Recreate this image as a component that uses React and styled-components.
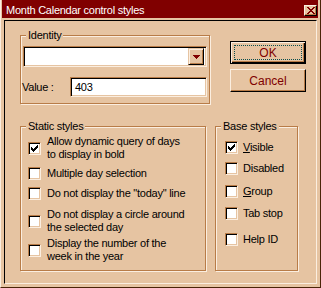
import styled, { createGlobalStyle } from "styled-components";

const face = "#e6c4a2";
const light = "#fbeee0";
const shadow = "#b87c48";
const maroon = "#800000";

const GlobalStyle = createGlobalStyle`
  body {
    margin: 0;
    font-family: "Liberation Sans", Arial, sans-serif;
    font-size: 11px;
    letter-spacing: -0.25px;
    color: #000;
  }
`;

const Frame = styled.div`
  box-sizing: border-box;
  width: 321px;
  height: 288px;
  display: flex;
  flex-direction: column;
  padding: 0 2px 3px 1px;
  background: ${face};
  border-left: 1px solid ${light};
  border-right: 1px solid #4a2408;
  border-bottom: 1px solid #4a2408;
`;

const TitleBar = styled.div`
  box-sizing: border-box;
  height: 18px;
  display: flex;
  align-items: flex-start;
  justify-content: space-between;
  padding: 4px 1px 0 4px;
  background: ${maroon};
  color: #fff;
  line-height: 13px;
`;

const CloseButton = styled.div`
  box-sizing: border-box;
  width: 13px;
  height: 11px;
  margin-top: 1px;
  display: flex;
  align-items: center;
  justify-content: center;
  background: ${face};
  border: 1px solid;
  border-color: ${light} #000 #000 ${light};
  box-shadow: inset -1px -1px 0 ${shadow};
`;

const Client = styled.div`
  flex: 1;
  box-sizing: border-box;
  margin: 2px 1px 0 2px;
  padding: 14px 0 0 15px;
  border: 1px solid;
  border-color: #000 ${light} ${light} #000;
`;

const Row = styled.div`
  display: flex;
  align-items: flex-start;
`;

const Group = styled.div`
  position: relative;
  box-sizing: border-box;
  width: ${(p) => p.$w}px;
  height: ${(p) => p.$h}px;
  padding: ${(p) => p.$pad};
  margin-left: ${(p) => p.$ml || 0}px;
  border: 1px solid ${shadow};
  box-shadow: 1px 1px 0 ${light}, inset 1px 1px 0 ${light};
`;

const Caption = styled.span`
  position: absolute;
  top: -7px;
  left: 5px;
  padding: 0 2px;
  line-height: 13px;
  background: ${face};
`;

const Combo = styled.div`
  box-sizing: border-box;
  width: 184px;
  height: 21px;
  margin: 10px 0 0 1px;
  display: flex;
  justify-content: flex-end;
  align-items: center;
  background: #fff;
  border: 1px solid;
  border-color: ${shadow} ${light} ${light} ${shadow};
  box-shadow: inset 1px 1px 0 #000, inset -1px -1px 0 ${face};
  padding: 2px;
`;

const DropButton = styled.div`
  box-sizing: border-box;
  width: 16px;
  height: 17px;
  display: flex;
  align-items: center;
  justify-content: center;
  background: ${face};
  border: 1px solid;
  border-color: ${face} #000 #000 ${face};
  box-shadow: inset 1px 1px 0 ${light}, inset -1px -1px 0 ${shadow};
`;

const ValueRow = styled.div`
  display: flex;
  align-items: center;
  margin-top: 10px;
`;

const ValueLabel = styled.span`
  width: 48px;
  line-height: 13px;
`;

const Edit = styled.div`
  box-sizing: border-box;
  width: 137px;
  height: 20px;
  padding: 0 4px;
  display: flex;
  align-items: center;
  background: #fff;
  border: 1px solid;
  border-color: ${shadow} ${light} ${light} ${shadow};
  box-shadow: inset 1px 1px 0 #000, inset -1px -1px 0 ${face};
`;

const ButtonColumn = styled.div`
  display: flex;
  flex-direction: column;
  gap: 5px;
  margin: 6px 0 0 20px;
`;

const PushButton = styled.div`
  position: relative;
  box-sizing: border-box;
  width: 76px;
  height: 23px;
  display: flex;
  align-items: center;
  justify-content: center;
  color: ${maroon};
  font-size: 12px;
  letter-spacing: 0;
  border: 1px solid;
  border-color: ${(p) => (p.$default ? "#000" : `${light} #000 #000 ${light}`)};
  box-shadow: ${(p) =>
    p.$default
      ? `inset 1px 1px 0 ${light}, inset -1px -1px 0 #000, inset -2px -2px 0 ${shadow}`
      : `inset -1px -1px 0 ${shadow}`};

  &::after {
    content: "";
    display: ${(p) => (p.$default ? "block" : "none")};
    position: absolute;
    inset: 3px 3px 3px 3px;
    border: 1px dotted #0b4f4f;
  }
`;

const CheckRow = styled.div`
  display: flex;
  align-items: center;
  gap: ${(p) => p.$gap}px;
  margin-top: ${(p) => p.$mt}px;
  line-height: 13px;
`;

const Box = styled.span`
  box-sizing: border-box;
  flex-shrink: 0;
  width: 13px;
  height: 13px;
  padding: 1px;
  display: flex;
  background: #fff;
  border: 1px solid;
  border-color: ${shadow} ${light} ${light} ${shadow};
  box-shadow: inset 1px 1px 0 #000, inset -1px -1px 0 ${face};
`;

const CheckMark = () => (
  <svg width="9" height="9" viewBox="0 0 9 9" shapeRendering="crispEdges">
    <path
      fill="#000"
      d="M7 1h1v1h-1zM6 2h2v1h-2zM1 3h1v1h-1zM5 3h3v1h-3zM1 4h2v1h-2zM4 4h3v1h-3zM1 5h5v1h-5zM2 6h3v1h-3zM3 7h1v1h-1z"
    />
  </svg>
);

const Check = ({ checked, mt, gap = 5, children }) => (
  <CheckRow $mt={mt} $gap={gap}>
    <Box>{checked && <CheckMark />}</Box>
    <span>{children}</span>
  </CheckRow>
);

const staticStyles = [
  { mt: 8, checked: true, text: ["Allow dynamic query of days", "to display in bold"] },
  { mt: 6, text: ["Multiple day selection"] },
  { mt: 7, text: ["Do not display the \"today\" line"] },
  { mt: 8, text: ["Do not display a circle around", "the selected day"] },
  { mt: 3, text: ["Display the number of the", "week in the year"] },
];

const App = () => (
  <>
    <GlobalStyle />
    <Frame>
      <TitleBar>
        <span>Month Calendar control styles</span>
        <CloseButton>
          <svg width="8" height="7" viewBox="0 0 8 7" shapeRendering="crispEdges">
            <path
              fill={maroon}
              d="M0 0h2v1h-2zM6 0h2v1h-2zM1 1h2v1h-2zM5 1h2v1h-2zM2 2h4v1h-4zM3 3h2v1h-2zM2 4h4v1h-4zM1 5h2v1h-2zM5 5h2v1h-2zM0 6h2v1h-2zM6 6h2v1h-2z"
            />
          </svg>
        </CloseButton>
      </TitleBar>
      <Client>
        <Row>
          <Group $w={190} $h={69} $pad="0 0 0 1px">
            <Caption>Identity</Caption>
            <Combo>
              <DropButton>
                <svg width="7" height="4" viewBox="0 0 7 4" shapeRendering="crispEdges">
                  <path fill={maroon} d="M0 0h7v1h-7zM1 1h5v1h-5zM2 2h3v1h-3zM3 3h1v1h-1z" />
                </svg>
              </DropButton>
            </Combo>
            <ValueRow>
              <ValueLabel>Value :</ValueLabel>
              <Edit>403</Edit>
            </ValueRow>
          </Group>
          <ButtonColumn>
            <PushButton $default>OK</PushButton>
            <PushButton>Cancel</PushButton>
          </ButtonColumn>
        </Row>
        <Row style={{ marginTop: 22 }}>
          <Group $w={186} $h={145} $pad="0 0 0 7px">
            <Caption>Static styles</Caption>
            {staticStyles.map((s, i) => (
              <Check key={i} mt={s.mt} checked={s.checked} gap={6}>
                {s.text.map((line, j) => (
                  <div key={j}>{line}</div>
                ))}
              </Check>
            ))}
          </Group>
          <Group $w={83} $h={145} $pad="0 0 0 9px" $ml={9}>
            <Caption>Base styles</Caption>
            <Check mt={14} checked>
              <u>V</u>isible
            </Check>
            <Check mt={8}>Disabled</Check>
            <Check mt={10}>
              <u>G</u>roup
            </Check>
            <Check mt={9}>Tab stop</Check>
            <Check mt={13}>Help ID</Check>
          </Group>
        </Row>
      </Client>
    </Frame>
  </>
);

export default App;
